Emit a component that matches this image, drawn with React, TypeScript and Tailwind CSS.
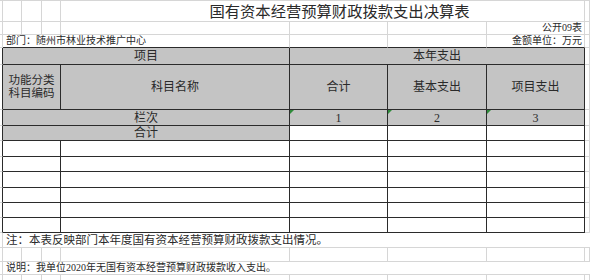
import type { ReactNode } from "react";

// Light spreadsheet gridline vs. dark table rule
const g = "border-r border-b border-r-[#d6d6d6] border-b-[#d6d6d6]";
const d = "border-r border-b border-r-[#2b2b2b] border-b-[#2b2b2b]";
const head = `${d} bg-[#c4c4c4]`;

function C({
  className = "",
  colSpan,
  children,
}: {
  className?: string;
  colSpan?: number;
  children?: ReactNode;
}) {
  return (
    <td colSpan={colSpan} className={`p-0 ${className}`}>
      {children}
    </td>
  );
}

function Flag() {
  return (
    <span className="absolute left-0 top-0 h-0 w-0 border-t-[4px] border-r-[4px] border-t-[#2e8b3a] border-r-transparent" />
  );
}

export default function App() {
  const widths = [3, 19, 20, 19, 229, 98, 99, 98, 5];
  const emptyRows = [16, 15, 16, 15, 15, 15];

  return (
    <div
      className="h-[280px] w-[590px] overflow-hidden bg-white text-[#2a2a2a]"
      style={{ fontFamily: '"Liberation Serif", "Noto Sans CJK SC", serif' }}
    >
      <table className="w-[590px] table-fixed border-separate border-spacing-0 border-t border-t-[#d6d6d6]">
        <colgroup>
          {widths.map((w, i) => (
            <col key={i} style={{ width: w }} />
          ))}
        </colgroup>
        <tbody>
          {/* Title */}
          <tr className="h-[21px]">
            <C className={g} />
            <C className={g} />
            <C className={g} />
            <C className={g} />
            <C colSpan={4} className={`${g} pl-[34px] text-center align-bottom text-[15.3px] leading-[18px]`}>
              国有资本经营预算财政拨款支出决算表
            </C>
            <C className={g} />
          </tr>
          <tr className="h-[13px]">
            <C className={g} />
            <C className={g} />
            <C className={g} />
            <C className={g} />
            <C className={g} />
            <C className={g} />
            <C className={g} />
            <C className={`${g} pr-[2px] text-right text-[10px] leading-[12px]`}>公开09表</C>
            <C className={g} />
          </tr>
          <tr className="h-[13px]">
            <C className={g} />
            <C colSpan={4} className={`border-r border-b border-r-[#d6d6d6] border-b-[#2b2b2b] pl-[3px] text-[10px] leading-[12px]`}>
              部门：随州市林业技术推广中心
            </C>
            <C className="border-r border-b border-r-[#d6d6d6] border-b-[#2b2b2b]" />
            <C className="border-r border-b border-r-[#d6d6d6] border-b-[#2b2b2b]" />
            <C className="border-r border-b border-r-[#d6d6d6] border-b-[#2b2b2b] pr-[2px] text-right text-[10px] leading-[12px]">
              金额单位：万元
            </C>
            <C className={g} />
          </tr>

          {/* Header */}
          <tr className="h-[17px] text-[12px] leading-[14px]">
            <C className="border-r border-b border-r-[#2b2b2b] border-b-[#d6d6d6]" />
            <C colSpan={4} className={`${head} text-center`}>项目</C>
            <C colSpan={3} className={`${head} text-center`}>本年支出</C>
            <C className={g} />
          </tr>
          <tr className="h-[45px] text-[12px] leading-[14px]">
            <C className="border-r border-b border-r-[#2b2b2b] border-b-[#d6d6d6]" />
            <C colSpan={3} className={`${head} text-center text-[11.5px] leading-[13px]`}>
              功能分类
              <br />
              科目编码
            </C>
            <C className={`${head} text-center`}>科目名称</C>
            <C className={`${head} text-center`}>合计</C>
            <C className={`${head} text-center`}>基本支出</C>
            <C className={`${head} text-center`}>项目支出</C>
            <C className={g} />
          </tr>
          <tr className="h-[16px] text-[12px] leading-[14px]">
            <C className="border-r border-b border-r-[#2b2b2b] border-b-[#d6d6d6]" />
            <C colSpan={4} className={`${head} text-center`}>栏次</C>
            <C className={`${head} relative text-center`}>
              <Flag />1
            </C>
            <C className={`${head} relative text-center`}>
              <Flag />2
            </C>
            <C className={`${head} relative text-center`}>
              <Flag />3
            </C>
            <C className={g} />
          </tr>
          <tr className="h-[15px] text-[12px] leading-[13px]">
            <C className="border-r border-b border-r-[#2b2b2b] border-b-[#d6d6d6]" />
            <C colSpan={4} className={`${head} text-center`}>合计</C>
            <C className={d} />
            <C className={d} />
            <C className={d} />
            <C className={g} />
          </tr>
          {emptyRows.map((h, i) => (
            <tr key={i} style={{ height: h }}>
              <C className="border-r border-b border-r-[#2b2b2b] border-b-[#d6d6d6]" />
              <C colSpan={3} className={d} />
              <C className={d} />
              <C className={d} />
              <C className={d} />
              <C className={d} />
              <C className={g} />
            </tr>
          ))}

          {/* Notes */}
          <tr className="h-[15px]">
            <C className={g} />
            <C colSpan={8} className="border-b border-b-[#d6d6d6] whitespace-nowrap pl-[3px] text-[11.5px] leading-[13px]">
              注：本表反映部门本年度国有资本经营预算财政拨款支出情况。
            </C>
          </tr>
          <tr className="h-[14px]">
            <C className={g} />
            <C className={g} />
            <C className={g} />
            <C className={g} />
            <C className={g} />
            <C className={g} />
            <C className={g} />
            <C className={g} />
            <C className={g} />
          </tr>
          <tr className="h-[13px]">
            <C className={g} />
            <C colSpan={8} className="border-b border-b-[#d6d6d6] whitespace-nowrap pl-[3px] text-[10px] leading-[12px]">
              说明：我单位2020年无国有资本经营预算财政拨款收入支出。
            </C>
          </tr>
          <tr className="h-[15px]">
            <C className={g} />
            <C className={g} />
            <C className={g} />
            <C className={g} />
            <C className={g} />
            <C className={g} />
            <C className={g} />
            <C className={g} />
            <C className={g} />
          </tr>
        </tbody>
      </table>
    </div>
  );
}
